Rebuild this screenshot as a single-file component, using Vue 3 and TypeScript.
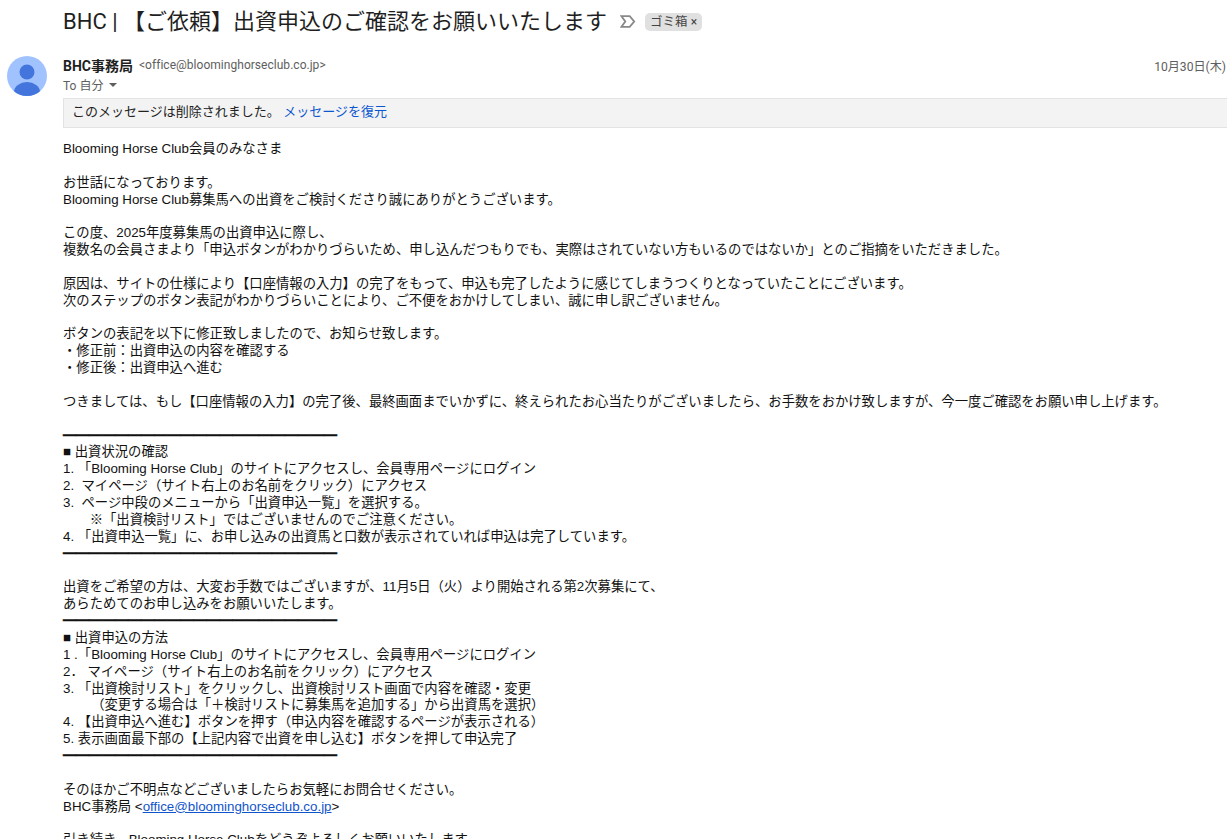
<script setup lang="ts">
const RULE = '━'.repeat(21)

const lines: string[] = [
  'Blooming Horse Club会員のみなさま',
  '',
  'お世話になっております。',
  'Blooming Horse Club募集馬への出資をご検討くださり誠にありがとうございます。',
  '',
  'この度、2025年度募集馬の出資申込に際し、',
  '複数名の会員さまより「申込ボタンがわかりづらいため、申し込んだつもりでも、実際はされていない方もいるのではないか」とのご指摘をいただきました。',
  '',
  '原因は、サイトの仕様により【口座情報の入力】の完了をもって、申込も完了したように感じてしまうつくりとなっていたことにございます。',
  '次のステップのボタン表記がわかりづらいことにより、ご不便をおかけしてしまい、誠に申し訳ございません。',
  '',
  'ボタンの表記を以下に修正致しましたので、お知らせ致します。',
  '・修正前：出資申込の内容を確認する',
  '・修正後：出資申込へ進む',
  '',
  'つきましては、もし【口座情報の入力】の完了後、最終画面までいかずに、終えられたお心当たりがございましたら、お手数をおかけ致しますが、今一度ご確認をお願い申し上げます。',
  '',
  RULE,
  '■ 出資状況の確認',
  '1. 「Blooming Horse Club」のサイトにアクセスし、会員専用ページにログイン',
  '2.  マイページ（サイト右上のお名前をクリック）にアクセス',
  '3.  ページ中段のメニューから「出資申込一覧」を選択する。',
  '　　※「出資検討リスト」ではございませんのでご注意ください。',
  '4. 「出資申込一覧」に、お申し込みの出資馬と口数が表示されていれば申込は完了しています。',
  RULE,
  '',
  '出資をご希望の方は、大変お手数ではございますが、11月5日（火）より開始される第2次募集にて、',
  'あらためてのお申し込みをお願いいたします。',
  RULE,
  '■ 出資申込の方法',
  '1 .「Blooming Horse Club」のサイトにアクセスし、会員専用ページにログイン',
  '2． マイページ（サイト右上のお名前をクリック）にアクセス',
  '3. 「出資検討リスト」をクリックし、出資検討リスト画面で内容を確認・変更',
  '　    （変更する場合は「＋検討リストに募集馬を追加する」から出資馬を選択）',
  '4. 【出資申込へ進む】ボタンを押す（申込内容を確認するページが表示される）',
  '5. 表示画面最下部の【上記内容で出資を申し込む】ボタンを押して申込完了',
  RULE,
  '',
  'そのほかご不明点などございましたらお気軽にお問合せください。',
]
</script>

<template>
  <main class="page">
    <header class="subject">
      <h1>BHC | 【ご依頼】出資申込のご確認をお願いいたします</h1>
      <svg class="marker" width="16" height="13" viewBox="0 0 16 13">
        <path d="M1.5 1.2h8.2l4.5 5.3-4.5 5.3H1.5l3.8-5.3z" fill="none" stroke="#888" stroke-width="1.8" />
      </svg>
      <span class="label">ゴミ箱 <span class="label-x">×</span></span>
    </header>

    <section class="message">
      <svg class="avatar" width="40" height="40" viewBox="0 0 40 40">
        <defs>
          <clipPath id="avatar-clip"><circle cx="20" cy="20" r="20" /></clipPath>
        </defs>
        <circle cx="20" cy="20" r="20" fill="#a0c3ff" />
        <g clip-path="url(#avatar-clip)" fill="#4375dd">
          <circle cx="20" cy="16" r="7.5" />
          <ellipse cx="20" cy="36" rx="13" ry="10" />
        </g>
      </svg>

      <div class="content">
        <div class="meta">
          <div class="from">
            <strong>BHC事務局</strong>
            <span class="address">&lt;office@bloominghorseclub.co.jp&gt;</span>
          </div>
          <span class="date">10月30日(木)</span>
        </div>
        <div class="to">To 自分 <i class="caret"></i></div>

        <div class="notice">
          このメッセージは削除されました。 <a href="#">メッセージを復元</a>
        </div>

        <div class="body">
          <div v-for="(line, i) in lines" :key="i" class="line" :class="{ rule: line === RULE }">{{ line }}</div>
          <div class="line">BHC事務局 &lt;<a class="mail" href="#">office@bloominghorseclub.co.jp</a>&gt;</div>
          <div class="line"></div>
          <div class="line">引き続き、Blooming Horse Clubをどうぞよろしくお願いいたします。</div>
        </div>
      </div>
    </section>
  </main>
</template>

<style>
html,
body {
  margin: 0;
  background: #fff;
  overflow: hidden;
}
</style>

<style scoped>
.page {
  height: 839px;
  overflow: hidden;
  font-family: 'Liberation Sans', 'Noto Sans CJK JP', sans-serif;
  color: #222;
}

.subject {
  display: flex;
  align-items: center;
  height: 43px;
  padding-left: 63px;
}

.subject h1 {
  margin: -5px 0 0;
  font-family: Roboto, 'Noto Sans CJK JP', sans-serif;
  font-size: 22px;
  font-weight: 400;
  color: #1f1f1f;
  white-space: nowrap;
}

.marker {
  margin: -1px 0 0 13px;
}

.label {
  margin-left: 9px;
  padding: 0 5px;
  height: 18px;
  line-height: 18px;
  border-radius: 5px;
  background: #e0e0e0;
  color: #444;
  font-size: 12.5px;
  font-family: Roboto, 'Noto Sans CJK JP', sans-serif;
}

.label-x {
  font-size: 12px;
}

.message {
  display: flex;
  padding-top: 13px;
}

.avatar {
  flex: none;
  margin-left: 7px;
  margin-right: 16px;
}

.content {
  flex: 1;
  min-width: 0;
}

.meta {
  display: flex;
  justify-content: space-between;
  height: 18px;
  align-items: center;
  font-family: Roboto, 'Noto Sans CJK JP', sans-serif;
}

.from {
  display: flex;
  align-items: center;
  gap: 6px;
}

.from strong {
  font-size: 14px;
  font-weight: 700;
  color: #1f1f1f;
}

.address {
  font-size: 12px;
  letter-spacing: 0.03px;
  color: #5e5e5e;
}

.date {
  font-size: 12.1px;
  color: #5e5e5e;
  padding-right: 1px;
}

.to {
  display: flex;
  align-items: center;
  gap: 4px;
  height: 20px;
  font-family: Roboto, 'Noto Sans CJK JP', sans-serif;
  font-size: 12px;
  color: #5e5e5e;
}

.caret {
  margin-left: 2px;
  margin-top: 2px;
  border: 4px solid transparent;
  border-top: 4px solid #5e5e5e;
  border-bottom: 0;
}

.notice {
  box-sizing: border-box;
  height: 30px;
  margin-top: 4px;
  padding-left: 8px;
  line-height: 26px;
  background: #f3f3f3;
  border-top: 1px solid #e3e3e3;
  border-bottom: 1px solid #e3e3e3;
  border-left: 1px solid #e3e3e3;
  font-size: 13px;
  color: #222;
}

.notice a {
  color: #0b57d0;
  text-decoration: none;
}

.body {
  padding-top: 13px;
  font-size: 13.333px;
  line-height: 16.865px;
  color: #111;
}

.line {
  min-height: 16.865px;
  white-space: pre;
}

.rule {
  font-size: 13.05px;
  font-weight: 700;
  -webkit-text-stroke: 0.5px #111;
}

.mail {
  color: #1155cc;
  text-decoration: underline;
}
</style>
